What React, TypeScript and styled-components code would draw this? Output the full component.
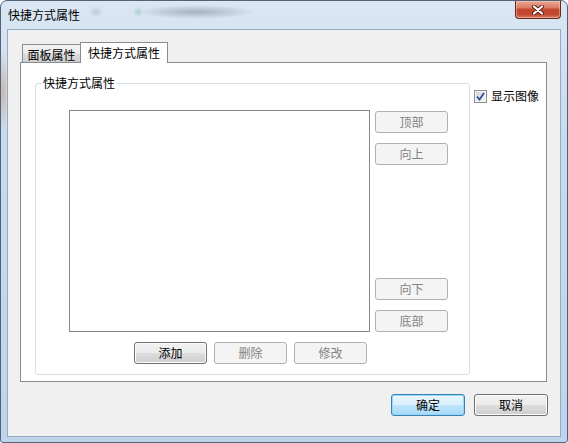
import { createGlobalStyle, styled } from "styled-components";

const GlobalStyle = createGlobalStyle`
  html, body {
    margin: 0;
    padding: 0;
  }
  body {
    width: 568px;
    height: 443px;
    overflow: hidden;
    font-family: "Noto Sans CJK SC", "Noto Sans", sans-serif;
    font-size: 12px;
    color: #000;
  }
  * {
    box-sizing: border-box;
  }
`;

const Window = styled.div`
  width: 568px;
  height: 443px;
  display: flex;
  flex-direction: column;
  border: 1px solid #4f6479;
  border-radius: 7px 7px 3px 3px;
  background:
    radial-gradient(ellipse 6px 40px at 2px 90px, rgba(200, 130, 80, 0.45), transparent),
    linear-gradient(180deg, #dae6f3 0%, #c9dbee 30%, #bfd4ea 100%);
  overflow: hidden;
`;

const TitleBar = styled.div`
  height: 28px;
  display: flex;
  justify-content: space-between;
  align-items: flex-start;
  padding-left: 7px;
  background:
    radial-gradient(ellipse 60px 7px at 195px 11px, rgba(70, 80, 100, 0.35), transparent),
    radial-gradient(ellipse 7px 6px at 95px 11px, rgba(80, 90, 110, 0.18), transparent),
    radial-gradient(ellipse 5px 6px at 137px 11px, rgba(40, 150, 90, 0.25), transparent);
`;

const Caption = styled.span`
  line-height: 14px;
  margin-top: 7px;
`;

const CloseButton = styled.div`
  width: 46px;
  height: 18px;
  margin-right: 6px;
  display: flex;
  align-items: center;
  justify-content: center;
  border: 1px solid #6e2618;
  border-top: none;
  border-radius: 0 0 4px 4px;
  background: linear-gradient(180deg, #e9a99a 0%, #d97a63 40%, #c5452d 50%, #c04a31 80%, #d7826a 100%);
  box-shadow: inset 0 0 0 1px rgba(255, 210, 200, 0.45);
`;

const Client = styled.div`
  flex: 1;
  margin: 0 6px 5px 6px;
  border: 1px solid #93abc4;
  background: #f0f0f0;
  display: flex;
  flex-direction: column;
  padding: 12px 13px 0 12px;
`;

const TabStrip = styled.div`
  height: 21px;
  margin-bottom: -1px;
  display: flex;
  align-items: flex-end;
  padding-left: 2px;
  position: relative;
  z-index: 1;
`;

const Tab = styled.div<{ $active?: boolean }>`
  display: flex;
  justify-content: center;
  border: 1px solid #898c95;
  border-bottom: none;
  line-height: 14px;
  ${(p) =>
    p.$active
      ? `
    width: 88px;
    height: 21px;
    margin-left: -1px;
    padding-top: 3px;
    background: #fff;
  `
      : `
    width: 59px;
    height: 18px;
    margin-bottom: 1px;
    padding-top: 3px;
    background: linear-gradient(180deg, #f2f2f2 0%, #ebebeb 45%, #dcdcdc 55%, #cfcfcf 100%);
  `}
`;

const Panel = styled.div`
  height: 320px;
  border: 1px solid #898c95;
  background: #fff;
  display: flex;
  align-items: flex-start;
  padding: 13px 0 0 14px;
`;

const GroupBox = styled.fieldset`
  margin: 0;
  padding: 0;
  min-width: 0;
  width: 435px;
  border: 1px solid #d5dfe5;
  border-radius: 3px;
`;

const GroupTitle = styled.legend`
  margin-left: 6px;
  padding: 0 1px;
  line-height: 14px;
`;

const GroupContent = styled.div`
  display: flex;
  flex-direction: column;
  padding: 20px 0 10px 33px;
`;

const ListRow = styled.div`
  display: flex;
  gap: 5px;
`;

const ListBox = styled.div`
  width: 301px;
  height: 222px;
  border: 1px solid #828790;
  background: #fff;
`;

const SideButtons = styled.div`
  height: 221px;
  margin-top: 1px;
  display: flex;
  flex-direction: column;
  justify-content: space-between;
`;

const SideGroup = styled.div`
  display: flex;
  flex-direction: column;
  gap: 10px;
`;

const ActionRow = styled.div`
  width: 301px;
  margin-top: 10px;
  display: flex;
  justify-content: flex-end;
  gap: 7px;
  padding-right: 3px;
`;

const Button = styled.button<{ $default?: boolean; $width?: number }>`
  width: ${(p) => p.$width ?? 73}px;
  height: 22px;
  padding: 0;
  font-family: inherit;
  font-size: 12px;
  line-height: 14px;
  color: #000;
  border: 1px solid ${(p) => (p.$default ? "#3c7fb1" : "#707070")};
  border-radius: 3px;
  background: ${(p) =>
    p.$default
      ? "linear-gradient(180deg, #eaf6fd 0%, #d9f0fc 48%, #bee6fd 52%, #a7d9f5 100%)"
      : "linear-gradient(180deg, #f2f2f2 0%, #ebebeb 48%, #dddddd 52%, #cfcfcf 100%)"};
  box-shadow: inset 0 0 0 1px ${(p) => (p.$default ? "rgba(140, 215, 250, 0.9)" : "#fcfcfc")};

  &:disabled {
    color: #838383;
    border-color: #adb2b5;
    background: #f4f4f4;
    box-shadow: none;
  }
`;

const CheckRow = styled.label`
  display: flex;
  align-items: center;
  gap: 4px;
  margin: 13px 0 0 4px;
  line-height: 14px;
`;

const CheckBox = styled.span`
  width: 13px;
  height: 13px;
  border: 1px solid #8e8f8f;
  display: flex;
  align-items: center;
  justify-content: center;
  background: linear-gradient(135deg, #cbcfd5 0%, #e8eaee 60%, #f6f6f6 100%);
  box-shadow: inset 0 0 0 1px #f4f4f4;
`;

const Footer = styled.div`
  margin-top: 12px;
  margin-right: -1px;
  display: flex;
  justify-content: flex-end;
  gap: 9px;
`;

export default function App() {
  return (
    <>
      <GlobalStyle />
      <Window>
        <TitleBar>
          <Caption>快捷方式属性</Caption>
          <CloseButton>
            <svg width="12" height="10" viewBox="0 0 12 10">
              <path d="M2 1.5 L10 8.5 M10 1.5 L2 8.5" stroke="#5a1c12" strokeWidth="4" strokeLinecap="round" />
              <path d="M2 1.5 L10 8.5 M10 1.5 L2 8.5" stroke="#fff" strokeWidth="2.2" strokeLinecap="round" />
            </svg>
          </CloseButton>
        </TitleBar>
        <Client>
          <TabStrip>
            <Tab>面板属性</Tab>
            <Tab $active>快捷方式属性</Tab>
          </TabStrip>
          <Panel>
            <GroupBox>
              <GroupTitle>快捷方式属性</GroupTitle>
              <GroupContent>
                <ListRow>
                  <ListBox />
                  <SideButtons>
                    <SideGroup>
                      <Button disabled>顶部</Button>
                      <Button disabled>向上</Button>
                    </SideGroup>
                    <SideGroup>
                      <Button disabled>向下</Button>
                      <Button disabled>底部</Button>
                    </SideGroup>
                  </SideButtons>
                </ListRow>
                <ActionRow>
                  <Button>添加</Button>
                  <Button disabled>删除</Button>
                  <Button disabled>修改</Button>
                </ActionRow>
              </GroupContent>
            </GroupBox>
            <CheckRow>
              <CheckBox>
                <svg width="9" height="9" viewBox="0 0 9 9">
                  <path d="M1 4.5 L3.5 7.5 L8 1" fill="none" stroke="#2f4f8f" strokeWidth="1.8" />
                </svg>
              </CheckBox>
              显示图像
            </CheckRow>
          </Panel>
          <Footer>
            <Button $default $width={74}>确定</Button>
            <Button $width={74}>取消</Button>
          </Footer>
        </Client>
      </Window>
    </>
  );
}
